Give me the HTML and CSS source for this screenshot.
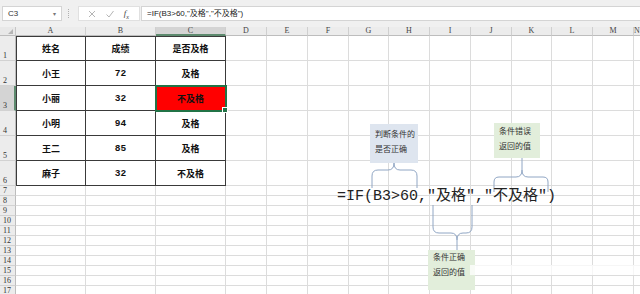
FILE: index.html
```html
<!DOCTYPE html>
<html lang="zh-CN">
<head>
    <meta charset="UTF-8">
    <title>IF 函数示例</title>
    <link rel="stylesheet" href="styles.css">
</head>
<body>
    <div class="toolbar">
        <div class="namebox">
            <span>C3</span>
            <span class="arrow">&#9662;</span>
        </div>
        <div class="grip"></div>
        <div class="buttons">
            <svg class="btn-icon" width="10" height="10" viewBox="0 0 10 10">
                <path d="M2 2 L8 8 M8 2 L2 8" stroke="#b5b5b5" stroke-width="1" fill="none"/>
            </svg>
            <svg class="btn-icon" width="10" height="10" viewBox="0 0 10 10">
                <path d="M1.5 5.5 L4 8 L8.5 2" stroke="#b5b5b5" stroke-width="1" fill="none"/>
            </svg>
            <span class="fx">f<sub>x</sub></span>
        </div>
        <div class="formula">=IF(B3&gt;60,"及格","不及格")</div>
    </div>

    <div class="sheet" id="sheet"></div>

    <div class="note note-blue note-cond">判断条件的<br>是否正确</div>
    <div class="note note-green note-false">条件错误<br>返回的值</div>
    <div class="note note-green note-true">条件正确<br>返回的值</div>

    <svg class="braces" width="640" height="294" viewBox="0 0 640 294">
        <path d="M372 188 V176 Q372 170 378 170 H388 Q394 170 394 163 Q394 170 400 170 H411 Q417 170 417 176 V188"/>
        <path d="M494 192 V182 Q494 177 499 177 H516 Q522 177 522 170 V158 M522 170 Q522 177 528 177 H543 Q548 177 548 182 V192"/>
        <path d="M433 205 V227 Q433 233 439 233 H451 Q457 233 457 240 V250 M457 240 Q457 233 463 233 H466 Q472 233 472 227 V205"/>
    </svg>

    <div class="big-formula">=IF(B3&gt;60,"及格","不及格")</div>

    <div class="watermark"></div>

    <script>
        const cols = ['A', 'B', 'C', 'D', 'E', 'F', 'G', 'H', 'I', 'J', 'K', 'L', 'M', 'N'];
        const data = [
            ['姓名', '成绩', '是否及格'],
            ['小王', '72', '及格'],
            ['小丽', '32', '不及格'],
            ['小明', '94', '及格'],
            ['王二', '85', '及格'],
            ['麻子', '32', '不及格']
        ];
        const sheet = document.getElementById('sheet');

        function addCell(cls, text) {
            const el = document.createElement('div');
            el.className = cls;
            if (text) el.textContent = text;
            sheet.appendChild(el);
            return el;
        }

        addCell('corner');
        cols.forEach(c => addCell('col-head' + (c === 'C' ? ' active' : ''), c));

        for (let r = 1; r <= 17; r++) {
            addCell('row-head' + (r === 3 ? ' active' : '') + (r <= 6 ? ' tall' : ''), String(r));
            cols.forEach((c, i) => {
                let cls = 'cell';
                let text = '';
                if (r <= 6 && i < 3) {
                    cls += ' t';
                    if (i === 0) cls += ' t-left';
                    if (r === 1) cls += ' t-top';
                    if (/^\d+$/.test(data[r - 1][i])) cls += ' num';
                    text = data[r - 1][i];
                }
                if (r === 3 && c === 'C') cls += ' selected';
                addCell(cls, text);
            });
        }
    </script>
</body>
</html>
```

FILE: styles.css
```css
body {
    margin: 0;
    padding: 0;
    width: 640px;
    height: 294px;
    overflow: hidden;
    position: relative;
    background: white;
    font-family: 'Liberation Sans', 'Noto Sans CJK SC', sans-serif;
    color: #222;
}
.toolbar {
    height: 27px;
    background: #f0f0f0;
    display: flex;
    align-items: flex-start;
    padding-top: 6px;
    box-sizing: border-box;
}
.namebox {
    width: 60px;
    height: 15px;
    margin-left: 2px;
    background: white;
    border: 1px solid #d4d4d4;
    box-sizing: border-box;
    display: flex;
    align-items: center;
    justify-content: space-between;
    padding: 0 5px;
    font-size: 8px;
    color: #333;
}
.namebox .arrow {
    font-size: 6px;
    color: #777;
}
.grip {
    width: 1px;
    height: 9px;
    margin: 3px 8px 0 6px;
    border-left: 1px dotted #b0b0b0;
}
.buttons {
    width: 62px;
    height: 15px;
    background: white;
    border: 1px solid #e0e0e0;
    box-sizing: border-box;
    display: flex;
    align-items: center;
    justify-content: space-around;
    padding: 0 6px 0 4px;
}
.fx {
    font-family: 'Liberation Serif', serif;
    font-style: italic;
    font-size: 9px;
    color: #444;
}
.fx sub {
    font-size: 6px;
}
.formula {
    flex: 1;
    height: 15px;
    margin-left: 1px;
    background: white;
    border: 1px solid #d4d4d4;
    border-right: none;
    box-sizing: border-box;
    padding-left: 5px;
    font-size: 8px;
    line-height: 13px;
    color: #222;
}
.sheet {
    display: grid;
    grid-template-columns: 16px 70px 70px 70px 41px 41px 41px 40px 41px 41px 41px 40px 41px 41px 1fr;
    grid-template-rows: 9px repeat(6, 25px) repeat(11, 10px);
}
.sheet > div {
    box-sizing: border-box;
}
.corner {
    background: #e8e8e8;
    border-right: 1px solid #c6c6c6;
    border-bottom: 1px solid #bdbdbd;
    position: relative;
}
.corner::after {
    content: '';
    position: absolute;
    right: 2px;
    bottom: 1px;
    border-left: 5px solid transparent;
    border-bottom: 5px solid #b4b4b4;
}
.col-head {
    background: #ececec;
    border-right: 1px solid #cfcfcf;
    border-bottom: 1px solid #bdbdbd;
    font-family: 'Liberation Serif', serif;
    font-size: 8px;
    line-height: 8px;
    text-align: center;
    color: #444;
}
.col-head.active {
    background: #d4d4d4;
    border-bottom: 2px solid #5d8a6e;
}
.row-head {
    background: #ececec;
    border-right: 1px solid #bdbdbd;
    border-bottom: 1px solid #d2d2d2;
    font-family: 'Liberation Serif', serif;
    font-size: 8px;
    line-height: 9px;
    color: #333;
    padding-left: 3px;
    display: flex;
    align-items: flex-end;
}
.row-head.active {
    background: #d4d4d4;
    border-right: 2px solid #5d8a6e;
}
.cell {
    border-right: 1px solid #dcdcdc;
    border-bottom: 1px solid #dcdcdc;
}
.t {
    border-right: 1px solid #3a3a3a;
    border-bottom: 1px solid #3a3a3a;
    display: flex;
    align-items: center;
    justify-content: center;
    font-size: 9px;
    font-weight: bold;
    color: #111;
}
.t.num {
    font-family: 'Liberation Mono', monospace;
    font-size: 9.5px;
}
.t-left {
    border-left: 1px solid #3a3a3a;
}
.t-top {
    border-top: 1px solid #3a3a3a;
}
.selected {
    background: #ff0000;
    outline: 2px solid #217346;
    outline-offset: -1px;
    position: relative;
}
.selected::after {
    content: '';
    position: absolute;
    right: -3px;
    bottom: -3px;
    width: 4px;
    height: 4px;
    background: #217346;
    border: 1px solid white;
}
.note {
    position: absolute;
    box-sizing: border-box;
    font-size: 8px;
    line-height: 15px;
    color: #333;
    padding: 3px 0 0 5px;
}
.note-blue {
    background: #dee5ef;
}
.note-green {
    background: #e2eedb;
}
.note-cond {
    left: 370px;
    top: 124px;
    width: 48px;
    height: 39px;
}
.note-false {
    left: 494px;
    top: 123px;
    width: 46px;
    height: 35px;
    padding-top: 1px;
}
.note-true {
    left: 428px;
    top: 250px;
    width: 47px;
    height: 40px;
    padding-top: 0;
}
.braces {
    position: absolute;
    left: 0;
    top: 0;
}
.braces path {
    fill: none;
    stroke: #90a6c4;
    stroke-width: 1;
}
.big-formula {
    position: absolute;
    left: 337px;
    top: 187px;
    font-family: 'Liberation Mono', 'Noto Sans CJK SC', monospace;
    font-size: 15px;
    line-height: 20px;
    color: #222;
    white-space: nowrap;
}
.watermark {
    position: absolute;
    left: 470px;
    top: 265px;
    width: 170px;
    height: 10px;
    background: rgba(255, 255, 255, 0.75);
}
```
